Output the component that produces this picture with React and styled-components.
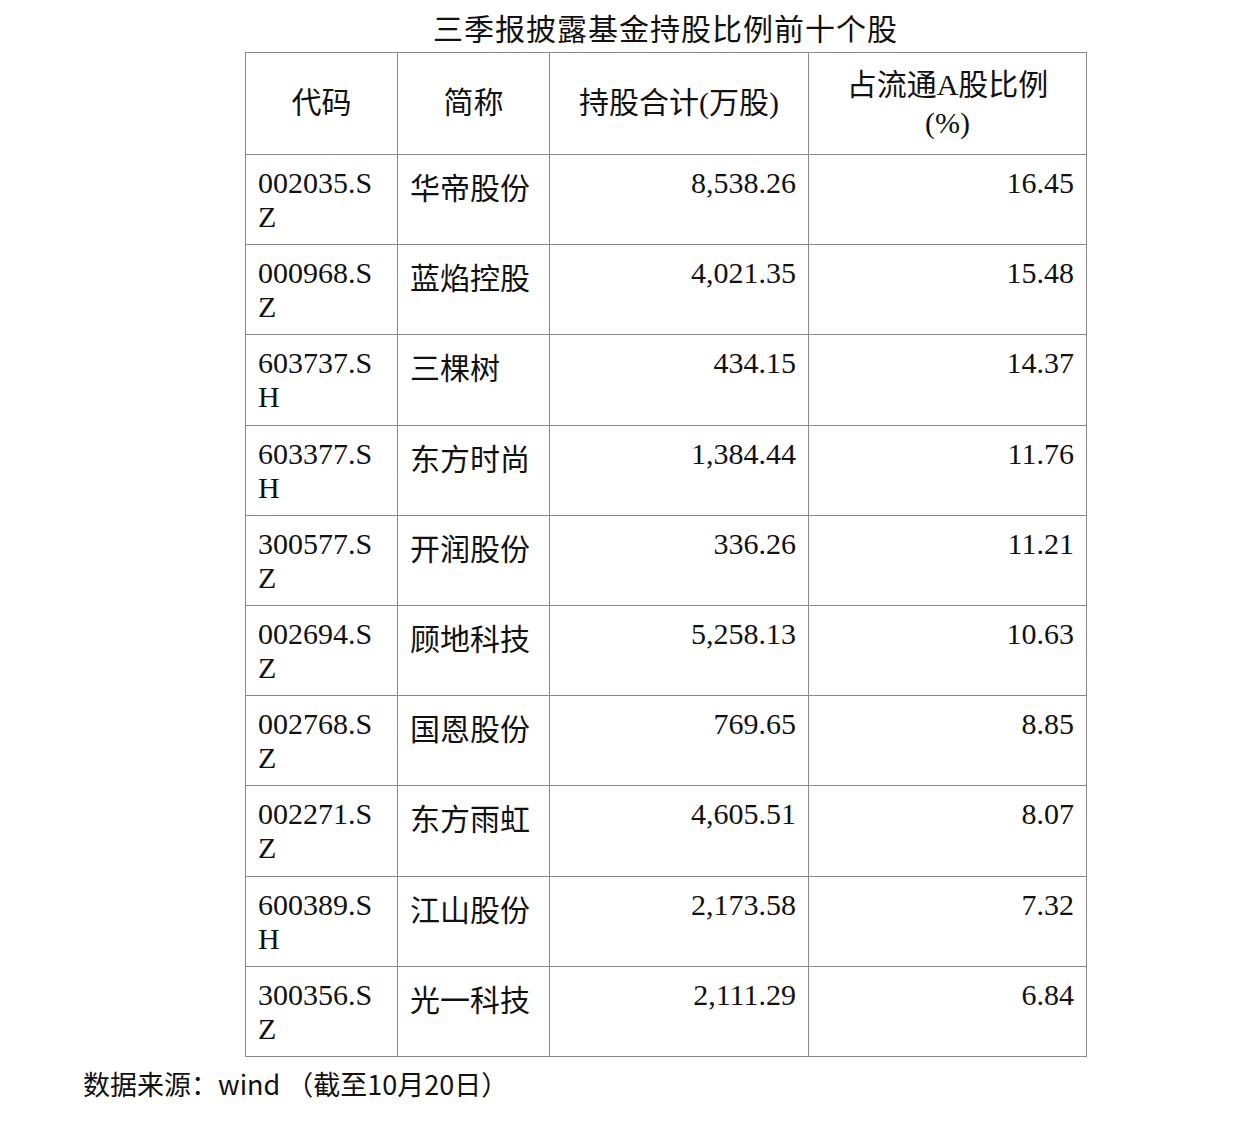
import React from "react";
import styled, { createGlobalStyle } from "styled-components";

const GlobalStyle = createGlobalStyle`
  body {
    margin: 0;
    background: #ffffff;
    color: #111111;
    font-family: "Liberation Serif", "Noto Sans CJK SC", serif;
  }
`;

const Page = styled.div`
  width: 1242px;
  height: 1121px;
  background: #ffffff;
  overflow: hidden;
`;

const Block = styled.div`
  margin-left: 245px;
  width: 841px;
`;

const Title = styled.h1`
  margin: 0;
  height: 52px;
  line-height: 54px;
  text-align: center;
  font-family: "Noto Sans CJK SC", sans-serif;
  font-weight: 400;
  font-size: 30px;
  letter-spacing: 1px;
  color: #111111;
`;

const Table = styled.table`
  width: 841px;
  border-collapse: collapse;
  table-layout: fixed;
  font-size: 30px;
`;

const Row = styled.tr`
  height: ${props => props.h || "90.2px"};
`;

const HeadCell = styled.th`
  padding: 0 10px ${props => (props.twoLine ? "0" : "2px")} 10px;
  border: 1px solid #8a8a8a;
  font-weight: 400;
  text-align: center;
  vertical-align: middle;
  line-height: 38px;
`;

const Cell = styled.td`
  padding: ${props => props.top || "11px"} 12px 0 12px;
  border: 1px solid #8a8a8a;
  vertical-align: top;
  line-height: 34px;
  text-align: ${props => props.align || "left"};
  word-break: break-all;
`;

const Footer = styled.div`
  margin: 9px 0 0 83px;
  font-family: "Noto Sans CJK SC", sans-serif;
  font-size: 27px;
  line-height: 36px;
  color: #111111;
`;

const rows = [
  ["002035.SZ", "华帝股份", "8,538.26", "16.45"],
  ["000968.SZ", "蓝焰控股", "4,021.35", "15.48"],
  ["603737.SH", "三棵树", "434.15", "14.37"],
  ["603377.SH", "东方时尚", "1,384.44", "11.76"],
  ["300577.SZ", "开润股份", "336.26", "11.21"],
  ["002694.SZ", "顾地科技", "5,258.13", "10.63"],
  ["002768.SZ", "国恩股份", "769.65", "8.85"],
  ["002271.SZ", "东方雨虹", "4,605.51", "8.07"],
  ["600389.SH", "江山股份", "2,173.58", "7.32"],
  ["300356.SZ", "光一科技", "2,111.29", "6.84"],
];

function App() {
  return (
    <Page>
      <GlobalStyle />
      <Block>
        <Title>三季报披露基金持股比例前十个股</Title>
        <Table>
          <colgroup>
            <col style={{ width: "152px" }} />
            <col style={{ width: "152px" }} />
            <col style={{ width: "259px" }} />
            <col style={{ width: "278px" }} />
          </colgroup>
          <thead>
            <Row h="102px">
              <HeadCell>代码</HeadCell>
              <HeadCell>简称</HeadCell>
              <HeadCell>持股合计(万股)</HeadCell>
              <HeadCell twoLine>
                占流通A股比例
                <br />
                (%)
              </HeadCell>
            </Row>
          </thead>
          <tbody>
            {rows.map(row => (
              <Row key={row[0]}>
                <Cell>{row[0]}</Cell>
                <Cell top="17px">{row[1]}</Cell>
                <Cell align="right">{row[2]}</Cell>
                <Cell align="right">{row[3]}</Cell>
              </Row>
            ))}
          </tbody>
        </Table>
      </Block>
      <Footer>数据来源：wind （截至10月20日）</Footer>
    </Page>
  );
}

export default App;
